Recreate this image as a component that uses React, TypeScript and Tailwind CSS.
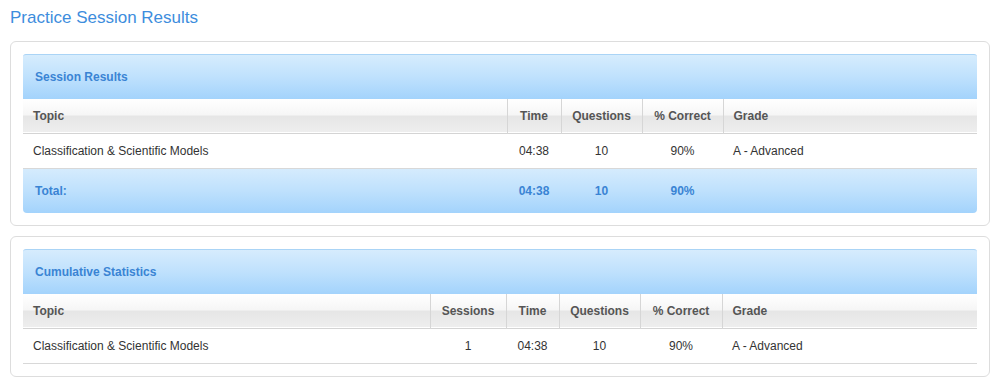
import React from "react";

type Col = { label: string; width: string; align: "left" | "center" };

const blueBar =
  "bg-[linear-gradient(to_bottom,#d6ecfd_0%,#bfe1fd_50%,#a3d3fc_100%)]";
const glossHead =
  "bg-[linear-gradient(to_bottom,#ffffff_0%,#f6f6f6_48%,#e6e6e6_52%,#eeeeee_100%)]";

function Panel({
  title,
  cols,
  rows,
  total,
}: {
  title: string;
  cols: Col[];
  rows: string[][];
  total?: string[];
}) {
  return (
    <div className="w-[980px] rounded-[6px] border border-[#dddddd] bg-white p-3">
      <div
        className={`h-[45px] rounded-t-[3px] border-t border-[#aad4f6] ${blueBar} flex items-center pl-3 text-[12px] font-bold text-[#3a84d4]`}
      >
        {title}
      </div>
      <table className="w-full table-fixed border-collapse text-[12px]">
        <colgroup>
          {cols.map((c) => (
            <col key={c.label} style={{ width: c.width }} />
          ))}
        </colgroup>
        <thead>
          <tr className={`h-[34px] ${glossHead} border-b border-[#d4d4d4]`}>
            {cols.map((c, i) => (
              <th
                key={c.label}
                className={`font-bold text-[#555555] ${
                  c.align === "left" ? "text-left pl-[10px]" : "text-center"
                } ${i > 0 ? "border-l border-[#d6d6d6]" : ""}`}
              >
                {c.label}
              </th>
            ))}
          </tr>
        </thead>
        <tbody>
          {rows.map((r, ri) => (
            <tr key={ri} className="h-[35px] border-b border-[#d8d8d8] text-[#333333]">
              {r.map((v, i) => (
                <td
                  key={i}
                  className={
                    cols[i].align === "left" ? "text-left pl-[10px]" : "text-center"
                  }
                >
                  {v}
                </td>
              ))}
            </tr>
          ))}
          {total && (
            <tr className={`h-[45px] ${blueBar} font-bold text-[#3a84d4]`}>
              {total.map((v, i) => (
                <td
                  key={i}
                  className={`${
                    cols[i].align === "left" ? "text-left pl-3" : "text-center"
                  } ${i === 0 ? "rounded-bl-[4px]" : ""} ${
                    i === total.length - 1 ? "rounded-br-[4px]" : ""
                  }`}
                >
                  {v}
                </td>
              ))}
            </tr>
          )}
        </tbody>
      </table>
    </div>
  );
}

export default function App(): JSX.Element {
  const resultCols: Col[] = [
    { label: "Topic", width: "484px", align: "left" },
    { label: "Time", width: "54px", align: "center" },
    { label: "Questions", width: "81px", align: "center" },
    { label: "% Correct", width: "81px", align: "center" },
    { label: "Grade", width: "254px", align: "left" },
  ];
  const statCols: Col[] = [
    { label: "Topic", width: "407px", align: "left" },
    { label: "Sessions", width: "76px", align: "center" },
    { label: "Time", width: "53px", align: "center" },
    { label: "Questions", width: "81px", align: "center" },
    { label: "% Correct", width: "82px", align: "center" },
    { label: "Grade", width: "255px", align: "left" },
  ];

  return (
    <div className="min-h-[386px] bg-white pl-[10px] font-['Liberation_Sans',Arial,sans-serif]">
      <h1 className="pt-[7px] h-[41px] text-[17px] leading-[22px] text-[#3d8ddd]">
        Practice Session Results
      </h1>
      <div className="flex flex-col gap-[10px]">
        <Panel
          title="Session Results"
          cols={resultCols}
          rows={[["Classification & Scientific Models", "04:38", "10", "90%", "A - Advanced"]]}
          total={["Total:", "04:38", "10", "90%", ""]}
        />
        <Panel
          title="Cumulative Statistics"
          cols={statCols}
          rows={[["Classification & Scientific Models", "1", "04:38", "10", "90%", "A - Advanced"]]}
        />
      </div>
    </div>
  );
}
